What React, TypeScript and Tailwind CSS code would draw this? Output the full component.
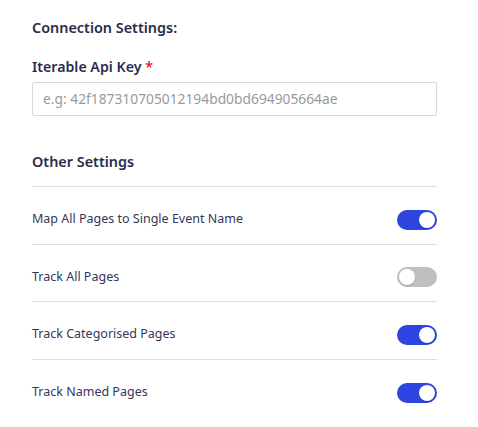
import React from "react";

function Toggle({ on }: { on: boolean }) {
  return (
    <div
      className={
        "flex h-5 w-10 items-center rounded-full px-[2px] " +
        (on ? "justify-end bg-[#2d44df]" : "justify-start bg-[#bfbfbf]")
      }
    >
      <div className="h-[16px] w-[16px] rounded-full bg-white shadow-[0_1px_1px_rgba(0,0,0,0.15)]" />
    </div>
  );
}

const rows: { label: string; on: boolean }[] = [
  { label: "Map All Pages to Single Event Name", on: true },
  { label: "Track All Pages", on: false },
  { label: "Track Categorised Pages", on: true },
  { label: "Track Named Pages", on: true },
];

export default function App() {
  return (
    <div
      className="min-h-[427px] w-[478px] bg-white pl-8 pr-[41px] pt-[18px]"
      style={{ fontFamily: '"Noto Sans", sans-serif' }}
    >
      <div className="text-[14.4px] font-semibold leading-5 text-[#2a2c4d]">
        Connection Settings:
      </div>
      <div className="mt-[19px] text-[14.2px] font-semibold leading-5 text-[#2a2c4d]">
        Iterable Api Key <span className="text-[#e5202e]">*</span>
      </div>
      <div className="mt-[5px] flex h-[34px] items-center rounded-[2px] border border-[#d9d9d9] px-[10px] text-[13.8px] text-[#9a9a9a]">
        e.g: 42f187310705012194bd0bd694905664ae
      </div>
      <div className="mt-[36px] text-[14.4px] font-semibold leading-5 text-[#2a2c4d]">
        Other Settings
      </div>
      <div className="mt-[14px] border-t border-[#dedede]">
        {rows.map((r, i) => (
          <div
            key={r.label}
            className={
              "flex h-[57.5px] items-center justify-between pt-[9px] " +
              (i < rows.length - 1 ? "border-b border-[#dedede]" : "")
            }
          >
            <span className="text-[12.5px] text-[#34365a]">{r.label}</span>
            <Toggle on={r.on} />
          </div>
        ))}
      </div>
    </div>
  );
}
